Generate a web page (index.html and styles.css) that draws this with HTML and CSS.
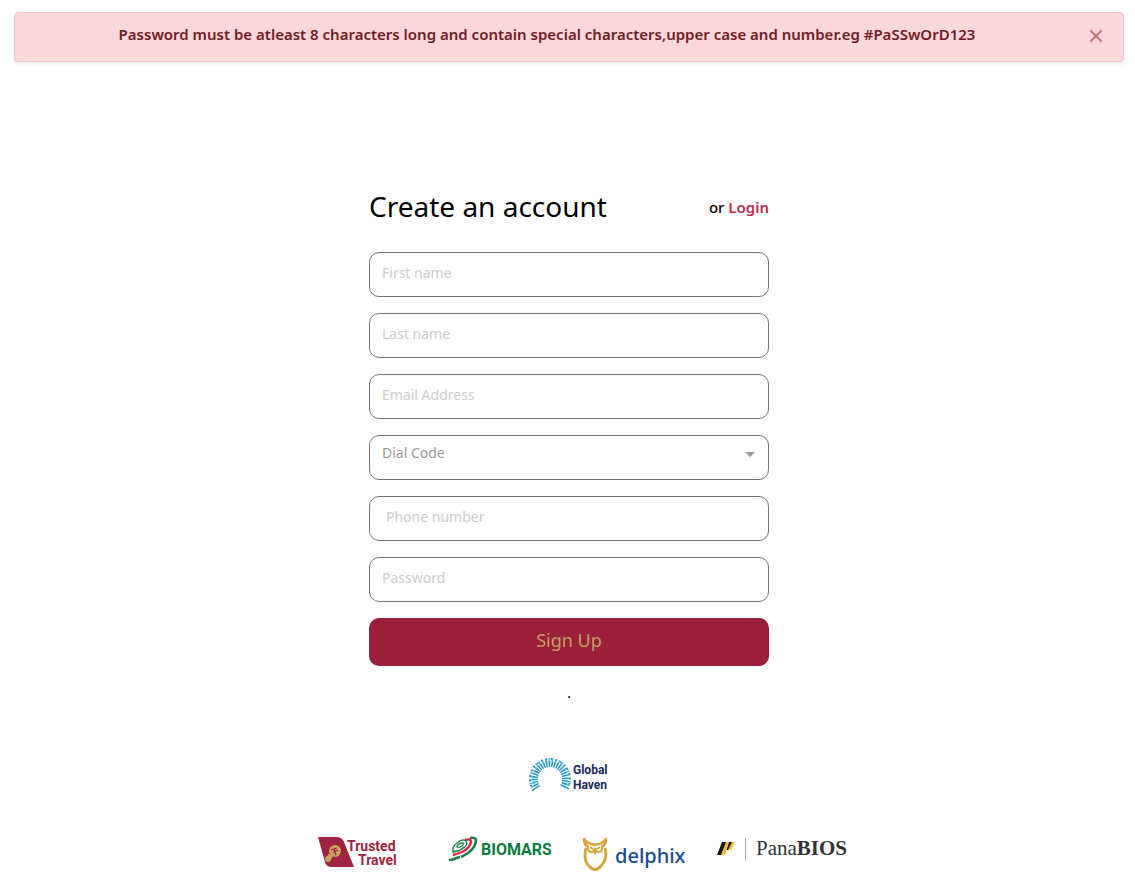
FILE: index.html
```html
<!DOCTYPE html>
<html lang="en">
<head>
<meta charset="utf-8">
<meta name="viewport" content="width=device-width, initial-scale=1">
<title>Create an account</title>
<link rel="stylesheet" href="styles.css">
</head>
<body>
<div class="page">
  <div class="alert" role="alert">
    <p class="alert-text">Password must be atleast 8 characters long and contain special characters,upper case and number.eg #PaSSwOrD123</p>
    <button class="alert-close" type="button" aria-label="Close">
      <svg width="14" height="14" viewBox="0 0 14 14"><path d="M1.500 1.500l11 11M12.500 1.500l-11 11" fill="none" stroke="currentColor" stroke-width="2"/></svg>
    </button>
  </div>

  <main class="signup">
    <header class="heading">
      <h1 class="title">Create an account</h1>
      <p class="switch">or <a class="login" href="#login">Login</a></p>
    </header>
    <form class="form">
      <input class="field" type="text" placeholder="First name" aria-label="First name">
      <input class="field" type="text" placeholder="Last name" aria-label="Last name">
      <input class="field" type="email" placeholder="Email Address" aria-label="Email Address">
      <div class="select-wrap">
        <select class="field select" aria-label="Dial Code"><option>Dial Code</option></select>
        <svg class="caret" width="10" height="5" viewBox="0 0 10 5"><path d="M0 0h10L5 5z" fill="#999"/></svg>
      </div>
      <input class="field phone" type="tel" placeholder="Phone number" aria-label="Phone number">
      <input class="field" type="password" placeholder="Password" aria-label="Password">
      <button class="submit" type="submit">Sign Up</button>
    </form>
    <p class="dot">.</p>
  </main>

  <footer class="footer">
    <svg class="logo" width="82" height="34" viewBox="0 0 82 34" role="img" aria-label="Global Haven">
      <g fill="none">
        <path d="M9.700 29.600A15 15 0 1 1 34.300 29.600" stroke="#1f93c0" stroke-width="6" stroke-dasharray="1.500 1.100"/>
        <path d="M6.400 31.900A19 19 0 1 1 37.600 31.900" stroke="#4db0d4" stroke-width="4" stroke-dasharray="1.400 1.900"/>
        <path d="M5.600 32.500A20 20 0 1 1 38.400 32.500" stroke="#278fb8" stroke-width="2" stroke-dasharray="1.400 3.500"/>
      </g>
      <text class="haven" x="45" y="16">Global</text>
      <text class="haven" x="45" y="31">Haven</text>
    </svg>

    <div class="partners">
      <svg class="logo" width="100" height="34" viewBox="0 0 100 34" role="img" aria-label="Trusted Travel">
        <path d="M1 1h18q6 0 8 5l10 25H15q-6 0-7-5z" fill="#9d2340"/>
        <circle cx="18" cy="15" r="6" fill="#c9a263"/>
        <path d="M14 19l-3 4" stroke="#c9a263" stroke-width="5"/>
        <circle cx="11" cy="23" r="3" fill="#c9a263"/>
        <path d="M14 14l6-2M16 16l5-2M17 13l2 6" stroke="#9d2340" stroke-width="1.200"/>
        <text class="trusted" x="30" y="15">Trusted</text>
        <text class="trusted" x="41" y="29">Travel</text>
      </svg>
      <svg class="logo" width="102" height="34" viewBox="0 0 102 34" role="img" aria-label="BIOMARS">
        <g fill="none">
          <path d="M21 2q5-1 6 2 0 7-8 13-5 3-7 4" stroke="#16824a" stroke-width="2.600"/>
          <path d="M11 21q-4 1-6 2-2 1-5 1" stroke="#16824a" stroke-width="2.600"/>
          <path d="M16 4q6-2 6 2-1 6-9 10-5 2-9 3" stroke="#e5243f" stroke-width="2.400"/>
          <path d="M4 15q-1-4 4-8 6-5 9-2 3 4-4 8-5 3-9 2zM8 11q0-3 5-4 3 0 0 3-3 2-5 1zM3 16q7 0 12-5" stroke="#16824a" stroke-width="1.300"/>
        </g>
        <text class="biomars" x="32" y="19">BIOMARS</text>
      </svg>
      <svg class="logo" width="102" height="36" viewBox="0 0 102 36" role="img" aria-label="delphix">
        <g fill="none" stroke="#d6a43b">
          <path d="M3 12Q0 24 6 30q6 7 12 0 7-7 4-18" stroke-width="2.800"/>
          <path d="M1 2q1 5 11 7Q22 7 23 2M1 2q0 7 4 9M23 2q0 7-4 9" stroke-width="2.600"/>
          <path d="M5 9q-1 7 3 7 3 0 4-4 1 4 4 4 4 0 3-7M7 11l3 2M17 11l-3 2" stroke-width="2"/>
          <path d="M12 12v6" stroke-width="2.600"/>
        </g>
        <text class="delphix" x="32" y="27">delphix</text>
      </svg>
      <svg class="logo" width="132" height="34" viewBox="0 0 132 34" role="img" aria-label="PanaBIOS">
        <path d="M5 6h5L5 19H0zM12 6h4l-4 8H9z" fill="#171717"/>
        <path d="M9 6h3L8 19H4zM15 6h3l-4 8h-3z" fill="#f2bf30"/>
        <path d="M28.500 2v22" stroke="#aaa"/>
        <text class="pana" x="39" y="19">Pana<tspan class="bios">BIOS</tspan></text>
      </svg>
    </div>
  </footer>
</div>
</body>
</html>
```

FILE: styles.css
```css
* {
  box-sizing: border-box;
}

body {
  margin: 0;
  background: #fff;
  color: #000;
  font-family: "Noto Sans", sans-serif;
  font-size: 15px;
}

.page {
  padding: 12px 11px 0 14px;
}

.alert {
  display: flex;
  align-items: center;
  min-height: 50px;
  padding: 0 20px;
  background: #f9d7da;
  border: 1px solid #f5c6cb;
  border-radius: 4px;
  box-shadow: 0 2px 4px rgba(0, 0, 0, 0.08);
}

.alert-text {
  flex: 1;
  margin: 0;
  padding-bottom: 6px;
  color: #721c24;
  font-size: 15px;
  font-weight: 600;
  line-height: 20px;
  text-align: center;
}

.alert-close {
  display: flex;
  width: 44px;
  padding: 0 0 2px;
  justify-content: flex-end;
  border: 0;
  background: none;
  color: #b9777d;
}

.signup {
  max-width: 400px;
  margin: 120px auto 0;
}

.heading {
  display: flex;
  align-items: center;
  justify-content: space-between;
  height: 48px;
}

.title {
  margin: 0;
  font-size: 28px;
  font-weight: 400;
  line-height: 40px;
}

.switch {
  margin: 0;
  padding-top: 2px;
  font-size: 15px;
  font-weight: 500;
}

.login {
  color: #b92c50;
  font-weight: 600;
  text-decoration: none;
}

.form {
  display: grid;
  gap: 16px;
  margin-top: 22px;
}

.field {
  display: block;
  width: 100%;
  height: 45px;
  padding: 0 12px 4px;
  border: 1px solid #747474;
  border-radius: 10px;
  background: #fff;
  color: #333;
  font: 400 14px/20px "Noto Sans", sans-serif;
}

.field::placeholder {
  color: #ccc;
  opacity: 1;
}

.phone {
  padding-left: 16px;
}

.select-wrap {
  position: relative;
}

.select {
  appearance: none;
  padding-bottom: 10px;
  color: #999;
}

.caret {
  position: absolute;
  top: 17px;
  right: 14px;
  pointer-events: none;
}

.submit {
  height: 48px;
  padding: 0 0 4px;
  border: 0;
  border-radius: 10px;
  background: #991f3a;
  color: #c69f63;
  font: 400 18px/24px "Noto Sans", sans-serif;
}

.dot {
  margin: 14px 0 0;
  line-height: 24px;
  text-align: center;
}

.footer {
  display: flex;
  flex-direction: column;
  align-items: center;
  padding-top: 54px;
}

.logo {
  display: block;
}

.partners {
  display: flex;
  flex-wrap: wrap;
  gap: 32px;
  padding-left: 28px;
  margin-top: 44px;
}

.haven {
  fill: #19295a;
  font: 700 12px Roboto, sans-serif;
}

.trusted {
  fill: #9d2340;
  font: 700 14px Roboto, sans-serif;
}

.biomars {
  fill: #087b43;
  font: 700 16px Roboto, sans-serif;
}

.delphix {
  fill: #174c8f;
  font: 500 20px "Noto Sans", sans-serif;
}

.pana {
  fill: #333;
  font: 400 21px "Liberation Serif", serif;
}

.bios {
  font-weight: 700;
}
```
